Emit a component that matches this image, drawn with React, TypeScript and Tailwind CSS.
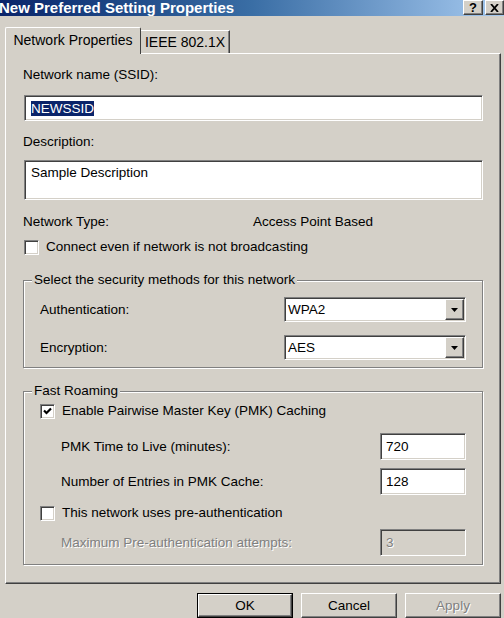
import React from 'react';

// classic 3D borders
const sunken =
  'border border-t-[#808080] border-l-[#808080] border-b-white border-r-white shadow-[inset_1px_1px_0_#404040,inset_-1px_-1px_0_#d4d0c8]';
const raised =
  'border border-t-white border-l-white border-b-[#404040] border-r-[#404040] shadow-[inset_-1px_-1px_0_#808080]';
const etched = 'border border-[#808080] shadow-[1px_1px_0_#fff,inset_1px_1px_0_#fff]';
const disabledText = 'text-[#808080] [text-shadow:1px_1px_0_#fff]';

const Checkbox = ({ checked }: { checked?: boolean }) => (
  <span className={`w-[15px] h-[15px] bg-white flex items-center justify-center shrink-0 ${sunken}`}>
    {checked && (
      <svg width="9" height="9" viewBox="0 0 9 9">
        <path d="M1 3.5 L3.5 6 L8 1.5" stroke="#000" strokeWidth="2.2" fill="none" />
      </svg>
    )}
  </span>
);

const Select = ({ value }: { value: string }) => (
  <div className={`w-[182px] h-[25px] bg-white flex items-stretch p-[1px] ${sunken}`}>
    <span className="flex-1 flex items-center pl-[2px]">{value}</span>
    <span className={`w-[19px] bg-[#d4d0c8] flex items-center justify-center ${raised}`}>
      <svg width="7" height="4" viewBox="0 0 7 4">
        <path d="M0 0h7L3.5 4z" fill="#000" />
      </svg>
    </span>
  </div>
);

const NumberBox = ({ value, disabled }: { value: string; disabled?: boolean }) => (
  <div
    className={`w-[86px] h-[27px] flex items-center pl-[5px] ${sunken} ${
      disabled ? `bg-[#d4d0c8] ${disabledText}` : 'bg-white'
    }`}
  >
    {value}
  </div>
);

const GroupBox = ({ title, className, children }: { title: string; className: string; children: React.ReactNode }) => (
  <div className={`relative ${etched} ${className}`}>
    <span className="absolute -top-[9px] left-[8px] px-[2px] bg-[#d4d0c8]">{title}</span>
    {children}
  </div>
);

const Button = ({ label, isDefault, disabled }: { label: string; isDefault?: boolean; disabled?: boolean }) => (
  <div className={`w-[96px] h-[25px] ${isDefault ? 'border border-black' : ''}`}>
    <div className={`w-full h-full flex items-center justify-center ${raised} ${disabled ? disabledText : ''}`}>
      {label}
    </div>
  </div>
);

export default function App() {
  return (
    <div className="w-[504px] h-[618px] bg-[#d4d0c8] overflow-hidden flex flex-col font-['Liberation_Sans',Arial,sans-serif] text-[13.5px] leading-[16px] text-black">
      {/* Title bar */}
      <div className="h-[16px] shrink-0 flex items-start justify-between bg-linear-to-r from-[#0a246a] via-[#3a6ea5] to-[#a6caf0]">
        <span className="-ml-[1px] text-[15px] leading-[15px] font-bold text-white">
          New Preferred Setting Properties
        </span>
        <div className="flex gap-[2px] h-[15px]">
          <span className={`w-[20px] h-full bg-[#d4d0c8] flex items-center justify-center text-[13px] font-bold leading-none ${raised}`}>
            ?
          </span>
          <span className={`w-[19px] h-full bg-[#d4d0c8] flex items-center justify-center ${raised}`}>
            <svg width="9" height="8" viewBox="0 0 9 8">
              <path d="M1 0 L8 8 M8 0 L1 8" stroke="#000" strokeWidth="1.8" />
            </svg>
          </span>
        </div>
      </div>

      {/* Tabs */}
      <div className="mt-[11px] ml-[5px] h-[26px] flex items-end relative z-10">
        <div className="w-[136px] h-[27px] -mb-[1px] bg-[#d4d0c8] border-t border-l border-white border-r border-r-[#404040] rounded-t-[2px] flex items-center justify-center pb-[2px] text-[14px]">
          Network Properties
        </div>
        <div className="w-[89px] h-[23px] border-t border-white border-r border-r-[#404040] shadow-[inset_-1px_0_0_#808080] flex items-center justify-center text-[14px]">
          IEEE 802.1X
        </div>
      </div>

      {/* Panel */}
      <div className="ml-[5px] w-[496px] h-[531px] shrink-0 border border-t-white border-l-white border-b-[#404040] border-r-[#404040] shadow-[inset_-1px_-1px_0_#808080] pt-[13px] pl-[17px] pr-[17px] flex flex-col">
        <div>Network name (SSID):</div>
        <div className={`ml-[1px] mt-[12px] h-[26px] bg-white flex items-center pl-[6px] ${sunken}`}>
          <span className="bg-[#0a246a] text-white leading-[15px]">NEWSSID</span>
        </div>

        <div className="mt-[13px]">Description:</div>
        <div className={`ml-[1px] mt-[10px] h-[40px] bg-white pl-[6px] pt-[4px] ${sunken}`}>Sample Description</div>

        <div className="mt-[14px] grid grid-cols-[230px_1fr]">
          <span>Network Type:</span>
          <span>Access Point Based</span>
        </div>

        <label className="mt-[9px] ml-[1px] flex items-center gap-[7px]">
          <Checkbox />
          <span>Connect even if network is not broadcasting</span>
        </label>

        <GroupBox title="Select the security methods for this network" className="mt-[25px] pt-[16px] pb-[7px] px-[16px]">
          <div className="flex items-center justify-between">
            <span>Authentication:</span>
            <Select value="WPA2" />
          </div>
          <div className="mt-[13px] flex items-center justify-between">
            <span>Encryption:</span>
            <Select value="AES" />
          </div>
        </GroupBox>

        <GroupBox title="Fast Roaming" className="mt-[23px] pt-[11px] pb-[8px] px-[16px]">
          <label className="flex items-center gap-[7px]">
            <Checkbox checked />
            <span>Enable Pairwise Master Key (PMK) Caching</span>
          </label>
          <div className="mt-[14px] pl-[21px] flex items-center justify-between">
            <span>PMK Time to Live (minutes):</span>
            <NumberBox value="720" />
          </div>
          <div className="mt-[8px] pl-[21px] flex items-center justify-between">
            <span>Number of Entries in PMK Cache:</span>
            <NumberBox value="128" />
          </div>
          <label className="mt-[10px] flex items-center gap-[7px]">
            <Checkbox />
            <span>This network uses pre-authentication</span>
          </label>
          <div className="mt-[8px] pl-[21px] flex items-center justify-between">
            <span className={disabledText}>Maximum Pre-authentication attempts:</span>
            <NumberBox value="3" disabled />
          </div>
        </GroupBox>
      </div>

      {/* Dialog buttons */}
      <div className="mt-[9px] pr-[3px] flex justify-end gap-[8px]">
        <Button label="OK" isDefault />
        <Button label="Cancel" />
        <Button label="Apply" disabled />
      </div>
    </div>
  );
}
